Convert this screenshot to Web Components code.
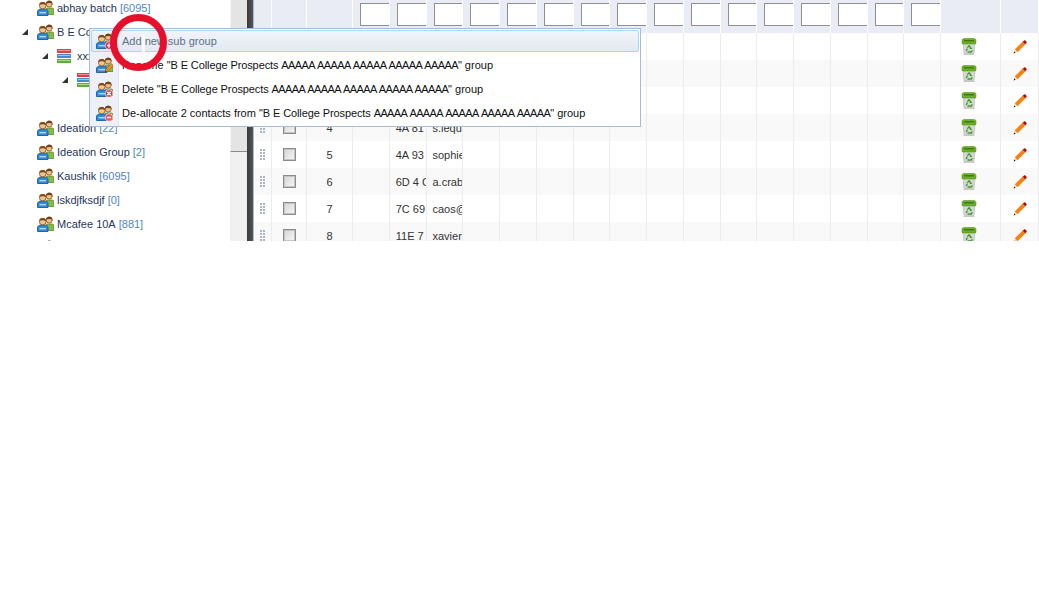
<!DOCTYPE html>
<html>
<head>
<meta charset="utf-8">
<title>Groups</title>
<style>
  html, body { margin: 0; background: #fff; }
  body { font-family: "Liberation Sans", Arial, sans-serif; font-size: 11px; }
</style>
</head>
<body>
<app-frame></app-frame>

<script>
const PEOPLE = `
  <path d="M9.500 8h5.500c1.300 0 2 .8 2 2v4.500H9.500z" fill="#86b84a" stroke="#5a8a2c" stroke-width=".8"/>
  <circle cx="12.200" cy="4" r="3.100" fill="#f0bd85" stroke="#7d5528" stroke-width=".8"/>
  <path d="M9 3.800c-.2-4 6.600-4.300 6.400 0-1.800-1.200-4.600-1.200-6.400 0z" fill="#6f4416"/>
  <path d="M.5 12c0-2 1.500-3 3.500-3h3.500c2 0 3.500 1 3.500 3v3.500H.5z" fill="#2f88dc" stroke="#1c5a9e" stroke-width=".9"/>
  <path d="M2.500 12.700h6.500" stroke="#cfe6fb" stroke-width="1.200"/>
  <circle cx="5.700" cy="5.600" r="3.300" fill="#f4c48e" stroke="#7d5528" stroke-width=".8"/>
  <path d="M2.300 5.200c-.2-4.200 7-4.500 6.800 0-1.900-1.200-4.900-1.200-6.800 0z" fill="#7c4a18"/>`

const BADGES = {
  none: '',
  add: `<circle cx="13" cy="12.500" r="3.800" fill="#d8202a" stroke="#fff" stroke-width=".6"/><path d="M13 10.300v4.400M10.800 12.500h4.400" stroke="#fff" stroke-width="1.400"/>`,
  edit: `<path d="M9 15.500l1-3.500 5.300-5.500 2 2L12 14z" fill="#f08a1c" stroke="#9a5a10" stroke-width=".6"/><path d="M9 15.500l.6-2 1.400 1.400z" fill="#333"/>`,
  del: `<circle cx="13" cy="12.500" r="3.800" fill="#d8393c" stroke="#fff" stroke-width=".6"/><path d="M11.300 10.800l3.400 3.400M14.700 10.800l-3.400 3.400" stroke="#fff" stroke-width="1.300"/>`,
  minus: `<circle cx="13" cy="12.500" r="3.800" fill="#e2543c" stroke="#fff" stroke-width=".6"/><path d="M10.800 12.500h4.400" stroke="#fff" stroke-width="1.600"/>`
}

const peopleIcon = (badge = 'none') => `<svg width="17" height="16" viewBox="0 0 17 16">${PEOPLE}${BADGES[badge]}</svg>`

const stackIcon = `<svg width="14" height="14" viewBox="0 0 14 14" shape-rendering="crispEdges">
  <rect x="0" y="0" width="14" height="4" rx="1" fill="#d8404a"/><rect x="1" y="1" width="12" height="1" fill="#f0909a"/>
  <rect x="0" y="5" width="14" height="4" rx="1" fill="#3f8fd0"/><rect x="1" y="6" width="12" height="1" fill="#98c8ee"/>
  <rect x="0" y="10" width="14" height="4" rx="1" fill="#6aa63a"/><rect x="1" y="11" width="12" height="1" fill="#b4d88e"/>
</svg>`

const binIcon = `<svg width="16" height="17" viewBox="0 0 16 17">
  <path d="M2 5h12l-1 10.500H3z" fill="#d4d6d2" stroke="#a7aaa5" stroke-width=".5"/>
  <path d="M1 2.500C1 1.200 2 .5 3 .5h10c1 0 2 .7 2 2V5c0 .6-.4 1-1 1H2c-.6 0-1-.4-1-1z" fill="#6cb124" stroke="#4a8a12" stroke-width=".5"/>
  <rect x="3" y="2" width="10" height="1.500" fill="#3f7d10"/>
  <path d="M8 7.500l2 2.800H8.800M5.200 13l1.200-2.400M6.500 14h3.800l1-1.800M6.400 9.800L8 7.500" fill="none" stroke="#3f9a2a" stroke-width="1.300"/>
  <path d="M2.500 16.500h11" stroke="#bbb" stroke-width=".8"/>
</svg>`

const pencilIcon = `<svg width="14" height="14" viewBox="0 0 14 14">
  <path d="M2 9.500L9.800 1.800l2.400 2.400L4.400 12z" fill="#f9820b" stroke="#d66a04" stroke-width=".5"/>
  <path d="M9.800 1.800l1.300-1.300c.4-.3.800-.3 1.200 0l1.200 1.200c.3.400.3.800 0 1.200l-1.300 1.300z" fill="#a81010"/>
  <path d="M2 9.500L4.400 12 .6 13.400z" fill="#f3d9ae"/>
  <path d="M1.300 11.400l1.200 1.300-1.900.7z" fill="#111"/>
</svg>`

class TreeNode extends HTMLElement {
  connectedCallback() {
    const depth = Number(this.getAttribute('depth') || 0)
    const open = this.hasAttribute('open')
    const kind = this.getAttribute('icon')
    const icon = kind === 'stack' ? stackIcon : kind === 'none' ? '' : peopleIcon()
    const count = this.getAttribute('count')
    this.attachShadow({ mode: 'open' }).innerHTML = `
      <style>
        :host { display: flex; align-items: center; height: 24px; padding-left: ${22 + depth * 20}px; white-space: nowrap; }
        .arrow { width: 15px; height: 7px; flex: none; }
        .arrow svg { display: block; }
        .icon { width: 20px; flex: none; display: flex; }
        .name { color: #26365c; }
        .count { color: #4f86c6; margin-left: 3px; }
      </style>
      <span class="arrow">${open ? '<svg width="7" height="7"><path d="M6 0v6H0z" fill="#333"/></svg>' : ''}</span>
      <span class="icon">${icon}</span>
      <span class="name"><slot></slot></span>
      ${count !== null ? `<span class="count">[${count}]</span>` : ''}
    `
  }
}

class GroupTree extends HTMLElement {
  connectedCallback() {
    this.attachShadow({ mode: 'open' }).innerHTML = `
      <style>
        :host { display: block; width: 230px; flex: none; overflow: hidden; background: #fff; }
        .inner { margin-top: -4px; }
      </style>
      <div class="inner"><slot></slot></div>
    `
  }
}

class PaneScrollbar extends HTMLElement {
  connectedCallback() {
    this.attachShadow({ mode: 'open' }).innerHTML = `
      <style>
        :host { display: block; width: 17px; flex: none; background: #f0f0f0; }
        .thumb { height: 152px; box-sizing: border-box; background: #e4e4e4; border-bottom: 1px solid #8a8a8a; border-left: 1px solid #f4f4f4; }
      </style>
      <div class="thumb"></div>
    `
  }
}

class GridCell extends HTMLElement {
  connectedCallback() {
    this.attachShadow({ mode: 'open' }).innerHTML = `
      <style>
        :host { display: flex; align-items: center; overflow: hidden; white-space: nowrap; box-sizing: border-box; border-right: 1px solid #ececec; color: #333; min-width: 0; }
        :host([center]) { justify-content: center; }
        :host([text]) { padding-left: 6px; }
        :host([bin]) { padding-right: 3px; }
      </style>
      <slot></slot>
    `
  }
}

const COLS = '18px 35px 46px repeat(16, 36.75px) 60px 38px'

class GridHeader extends HTMLElement {
  connectedCallback() {
    const filters = Array.from({ length: 16 }, () => `<div class="f"><i></i></div>`).join('')
    this.attachShadow({ mode: 'open' }).innerHTML = `
      <style>
        :host { display: grid; grid-template-columns: ${COLS}; height: 33px; background: #e9ecf5; }
        div { box-sizing: border-box; border-right: 1px solid #fff; overflow: hidden; }
        .f { padding: 3px 0 0 7px; }
        i { display: block; box-sizing: border-box; width: 40px; height: 23px; background: #fff; border: 1px solid #8f8f8f; }
      </style>
      <div></div><div></div><div></div>${filters}<div></div><div></div>
    `
  }
}

class GridRow extends HTMLElement {
  connectedCallback() {
    const n = this.getAttribute('n') || ''
    const code = this.getAttribute('code') || ''
    const mail = this.getAttribute('mail') || ''
    const blanks = Array.from({ length: 13 }, () => '<grid-cell></grid-cell>').join('')
    this.attachShadow({ mode: 'open' }).innerHTML = `
      <style>
        :host { display: grid; grid-template-columns: ${COLS}; height: 27px; background: #fff; flex: none; }
        :host([alt]) { background: #f9f9f9; }
        .grip { width: 6px; height: 12px; background-image: radial-gradient(circle at 1px 1px, #a9b4c4 1px, transparent 1px); background-size: 3px 3px; }
        .box { box-sizing: border-box; width: 13px; height: 13px; border: 1px solid #8b8b8b; background: linear-gradient(135deg, #d6d6d6, #f6f6f6); box-shadow: inset 0 0 0 1px #c4c4c4; }
        svg { display: block; }
      </style>
      <grid-cell center><span class="grip"></span></grid-cell>
      <grid-cell center><span class="box"></span></grid-cell>
      <grid-cell center>${n}</grid-cell>
      <grid-cell></grid-cell>
      <grid-cell text>${code}</grid-cell>
      <grid-cell text>${mail}</grid-cell>
      ${blanks}
      <grid-cell center bin>${binIcon}</grid-cell>
      <grid-cell center>${pencilIcon}</grid-cell>
    `
  }
}

class DataGrid extends HTMLElement {
  connectedCallback() {
    this.attachShadow({ mode: 'open' }).innerHTML = `
      <style>
        :host { display: block; flex: 1; min-width: 0; overflow: hidden; border-left: 1px solid #a9bdcf; background: #fff; }
      </style>
      <slot></slot>
    `
  }
}

class GroupName extends HTMLElement {
  connectedCallback() {
    this.attachShadow({ mode: 'open' }).innerHTML = `
      <style>
        :host { display: inline; }
        .a { letter-spacing: -.63px; word-spacing: 1px; }
        .n { letter-spacing: -.1px; }
      </style>
      <span class="n">"B E College Prospects </span><span class="a">AAAAA AAAAA AAAAA AAAAA AAAAA</span>"
    `
  }
}

class MenuItem extends HTMLElement {
  connectedCallback() {
    this.attachShadow({ mode: 'open' }).innerHTML = `
      <style>
        :host { display: flex; align-items: center; height: 24px; box-sizing: border-box; color: #111; white-space: nowrap; }
        .ic { width: 29px; height: 100%; flex: none; display: flex; align-items: center; padding-left: 6px; box-sizing: border-box; }
        .tx { padding-left: 3px; }
        :host([active]) { color: #5f7188; height: 22px; margin: 1px 1px 1px 1px; border: 1px solid #a9d9ef; border-radius: 2px; background: linear-gradient(#f1f4f9, #e3e8f2); }
        :host([active]) .ic { width: 27px; padding-left: 4px; }
      </style>
      <span class="ic">${peopleIcon(this.getAttribute('badge') || 'none')}</span>
      <span class="tx"><slot></slot></span>
    `
  }
}

class ContextMenu extends HTMLElement {
  connectedCallback() {
    this.attachShadow({ mode: 'open' }).innerHTML = `
      <style>
        :host { position: absolute; left: 89px; top: 28px; width: 552px; height: 99px; box-sizing: border-box; border: 1px solid #a9bccf; background: linear-gradient(to right, #edf0f8 28px, #dde3ee 28px, #dde3ee 29px, #fff 29px); }
      </style>
      <slot></slot>
    `
  }
}

class RedCircle extends HTMLElement {
  connectedCallback() {
    this.attachShadow({ mode: 'open' }).innerHTML = `
      <style>
        :host { position: absolute; left: 110px; top: 14px; width: 57px; height: 57px; box-sizing: border-box; border: 7px solid #e7102b; border-radius: 50%; }
        i { position: absolute; left: 25px; top: 14px; width: 3px; height: 17px; background: #fafbfd; }
      </style>
      <i></i>
    `
  }
}

class AppFrame extends HTMLElement {
  connectedCallback() {
    this.attachShadow({ mode: 'open' }).innerHTML = `
      <style>
        :host { display: block; position: relative; height: 614px; overflow: hidden; background: #fff; color: #333; }
        .top { display: flex; height: 241px; overflow: hidden; }
        .split { width: 6px; flex: none; background: linear-gradient(to right, #3a3a3a, #555); }
      </style>
      <div class="top">
        <group-tree>
          <tree-node count="6095">abhay batch</tree-node>
          <tree-node open>B E College Prospects</tree-node>
          <tree-node open depth="1" icon="stack">xxx</tree-node>
          <tree-node open depth="2" icon="stack"></tree-node>
          <tree-node icon="none"></tree-node>
          <tree-node count="22">Ideation</tree-node>
          <tree-node count="2">Ideation Group</tree-node>
          <tree-node count="6095">Kaushik</tree-node>
          <tree-node count="0">lskdjfksdjf</tree-node>
          <tree-node count="881">Mcafee 10A</tree-node>
          <tree-node></tree-node>
        </group-tree>
        <pane-scrollbar></pane-scrollbar>
        <div class="split"></div>
        <data-grid>
          <grid-header></grid-header>
          <grid-row></grid-row>
          <grid-row alt></grid-row>
          <grid-row></grid-row>
          <grid-row n="4" alt code="4A 81" mail="s.lequ"></grid-row>
          <grid-row n="5" code="4A 93" mail="sophie"></grid-row>
          <grid-row n="6" alt code="6D 4 C" mail="a.crab"></grid-row>
          <grid-row n="7" code="7C 69" mail="caos@"></grid-row>
          <grid-row n="8" alt code="11E 7" mail="xavier"></grid-row>
        </data-grid>
      </div>
      <context-menu>
        <menu-item active badge="add">Add new sub group</menu-item>
        <menu-item badge="edit">Rename <group-name></group-name> group</menu-item>
        <menu-item badge="del">Delete <group-name></group-name> group</menu-item>
        <menu-item badge="minus">De-allocate 2 contacts from <group-name></group-name> group</menu-item>
      </context-menu>
      <red-circle></red-circle>
    `
  }
}

customElements.define('tree-node', TreeNode)
customElements.define('group-tree', GroupTree)
customElements.define('pane-scrollbar', PaneScrollbar)
customElements.define('grid-cell', GridCell)
customElements.define('grid-header', GridHeader)
customElements.define('grid-row', GridRow)
customElements.define('data-grid', DataGrid)
customElements.define('group-name', GroupName)
customElements.define('menu-item', MenuItem)
customElements.define('context-menu', ContextMenu)
customElements.define('red-circle', RedCircle)
customElements.define('app-frame', AppFrame)
</script>
</body>
</html>
